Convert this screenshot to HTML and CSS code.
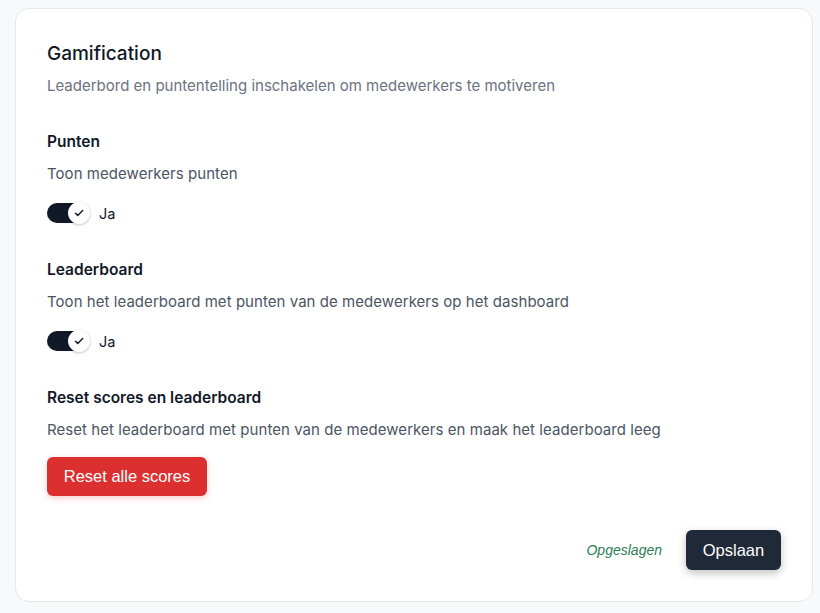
FILE: index.html
```html
<!DOCTYPE html>
<html lang="nl">
<head>
<meta charset="utf-8">
<link rel="stylesheet" href="styles.css">
</head>
<body>
<div class="card">
  <h2 class="title">Gamification</h2>
  <p class="subtitle">Leaderbord en puntentelling inschakelen om medewerkers te motiveren</p>

  <section class="setting">
    <h3 class="setting-title">Punten</h3>
    <p class="setting-desc">Toon medewerkers punten</p>
    <label class="toggle-row">
      <span class="toggle"><span class="knob"><svg viewBox="0 0 12 12" width="12" height="12"><path d="M2.5 6.2l2.3 2.3L9.6 3.6" fill="none" stroke="#111827" stroke-width="1.5" stroke-linecap="round" stroke-linejoin="round"/></svg></span></span>
      <span class="toggle-label">Ja</span>
    </label>
  </section>

  <section class="setting">
    <h3 class="setting-title">Leaderboard</h3>
    <p class="setting-desc">Toon het leaderboard met punten van de medewerkers op het dashboard</p>
    <label class="toggle-row">
      <span class="toggle"><span class="knob"><svg viewBox="0 0 12 12" width="12" height="12"><path d="M2.5 6.2l2.3 2.3L9.6 3.6" fill="none" stroke="#111827" stroke-width="1.5" stroke-linecap="round" stroke-linejoin="round"/></svg></span></span>
      <span class="toggle-label">Ja</span>
    </label>
  </section>

  <section class="setting">
    <h3 class="setting-title">Reset scores en leaderboard</h3>
    <p class="setting-desc">Reset het leaderboard met punten van de medewerkers en maak het leaderboard leeg</p>
    <button class="btn btn-danger">Reset alle scores</button>
  </section>

  <div class="footer">
    <span class="saved">Opgeslagen</span>
    <button class="btn btn-primary">Opslaan</button>
  </div>
</div>
</body>
</html>
```

FILE: styles.css
```css
* { box-sizing: border-box; }
html, body { margin: 0; padding: 0; }
body {
  background: #f8f9fb;
  font-family: Inter, "Noto Sans", sans-serif;
  color: #111827;
  padding: 8px 7px 11px 15px;
  height: 613px;
}
.card {
  background: #fff;
  border: 1px solid #e5e7eb;
  border-radius: 14px;
  padding: 31px 31px 31px 31px;
  height: 594px;
  display: flex;
  flex-direction: column;
}
.title {
  margin: 0;
  font-size: 19px;
  line-height: 28px;
  font-weight: 500;
  color: #111827;
}
.subtitle {
  margin: 8px 0 0;
  font-size: 15px;
  line-height: 20px;
  color: #6b7280;
}
.setting { margin-top: 34px; display: flex; flex-direction: column; align-items: flex-start; }
.setting-title {
  margin: 0;
  font-size: 15.5px;
  line-height: 24px;
  font-weight: 600;
  color: #111827;
}
.setting-desc {
  margin: 10px 0 0;
  font-size: 15px;
  line-height: 20px;
  letter-spacing: 0.05px;
  color: #4b5563;
}
.toggle-row {
  margin: 19px 0 1px;
  display: flex;
  align-items: center;
  gap: 10px;
}
.toggle {
  width: 42px;
  height: 20px;
  border-radius: 10px;
  background: #111827;
  position: relative;
  display: inline-block;
}
.knob {
  position: absolute;
  right: -1px;
  top: -1px;
  width: 22px;
  height: 22px;
  border-radius: 50%;
  background: #fff;
  box-shadow: 0 1px 3px rgba(0,0,0,0.25);
  display: flex;
  align-items: center;
  justify-content: center;
}
.toggle-label { font-size: 14.5px; color: #111827; }
.btn {
  font-family: "Liberation Sans", Arial, sans-serif;
  border: none;
  border-radius: 6px;
  cursor: pointer;
}
.btn-danger {
  margin-top: 17px;
  background: #dc2f2f;
  color: #fff;
  height: 39px;
  font-size: 16.5px;
  padding: 0;
  width: 160px;
  box-shadow: 0 2px 6px rgba(220,47,47,0.25);
}
.footer {
  margin-top: auto;
  display: flex;
  justify-content: flex-end;
  align-items: center;
  gap: 24px;
}
.saved {
  font-family: "Liberation Sans", Arial, sans-serif;
  font-style: italic;
  font-size: 14px;
  color: #2a7d55;
}
.btn-primary {
  background: #1f2937;
  color: #fff;
  height: 40px;
  width: 95px;
  font-size: 16.5px;
  padding: 0;
  box-shadow: 0 3px 8px rgba(0,0,0,0.25);
}
```
